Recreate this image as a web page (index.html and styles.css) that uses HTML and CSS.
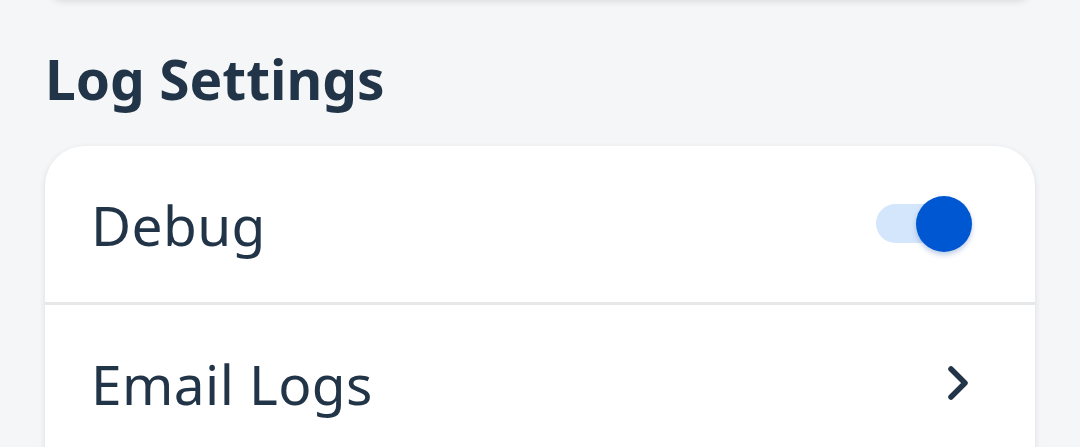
FILE: index.html
```html
<!DOCTYPE html>
<html lang="en">
<head>
    <meta charset="UTF-8">
    <meta name="viewport" content="width=device-width, initial-scale=1.0">
    <title>Log Settings</title>
    <link rel="stylesheet" href="styles.css">
</head>
<body>
    <!-- tail of the previous card, scrolled up out of view -->
    <div class="card card-prev"></div>

    <section class="group">
        <h2 class="group-title">Log Settings</h2>
        <div class="card card-tall">
            <div class="row">
                <span class="row-label">Debug</span>
                <label class="switch">
                    <input type="checkbox" checked>
                    <span class="track"></span>
                </label>
            </div>
            <div class="row">
                <span class="row-label">Email Logs</span>
                <svg class="chevron" width="24" height="36" viewBox="0 0 24 36">
                    <path d="M4 4 L18 18 L4 32" fill="none" stroke="#223548" stroke-width="5.5" stroke-linecap="round" stroke-linejoin="round"/>
                </svg>
            </div>
        </div>
    </section>
</body>
</html>
```

FILE: styles.css
```css
body {
    margin: 0;
    padding: 0;
    background-color: #f5f6f7;
    font-family: "Noto Sans", "Open Sans", sans-serif;
    color: #223548;
    overflow: hidden;
}
.card {
    background-color: white;
    margin: 0 45px 0 45px;
    border-radius: 40px;
    box-shadow: 0 2px 6px rgba(34, 53, 72, 0.12);
    overflow: hidden;
}
.card-prev {
    height: 40px;
    margin-top: -40px;
}
.card-tall {
    padding-bottom: 120px;
}
.group-title {
    margin: 44px 0 0 45px;
    font-size: 55px;
    font-weight: 700;
    line-height: 70px;
    height: 102px;
}
.row {
    display: flex;
    align-items: center;
    justify-content: space-between;
    height: 156px;
    padding: 0 64px 0 46px;
}
.row + .row {
    border-top: 3px solid #e6e7e8;
}
.row-label {
    font-size: 55px;
    letter-spacing: 0.4px;
}
.switch {
    position: relative;
    width: 95px;
    height: 56px;
}
.switch input {
    display: none;
}
.track {
    position: absolute;
    left: 0;
    top: 8px;
    width: 90px;
    height: 39px;
    border-radius: 20px;
    background-color: #d4e6fb;
}
.track::after {
    content: "";
    position: absolute;
    right: -6px;
    top: -8px;
    width: 56px;
    height: 56px;
    border-radius: 50%;
    background-color: #0057d2;
    box-shadow: 0 3px 5px rgba(0, 60, 160, 0.25);
}
```
